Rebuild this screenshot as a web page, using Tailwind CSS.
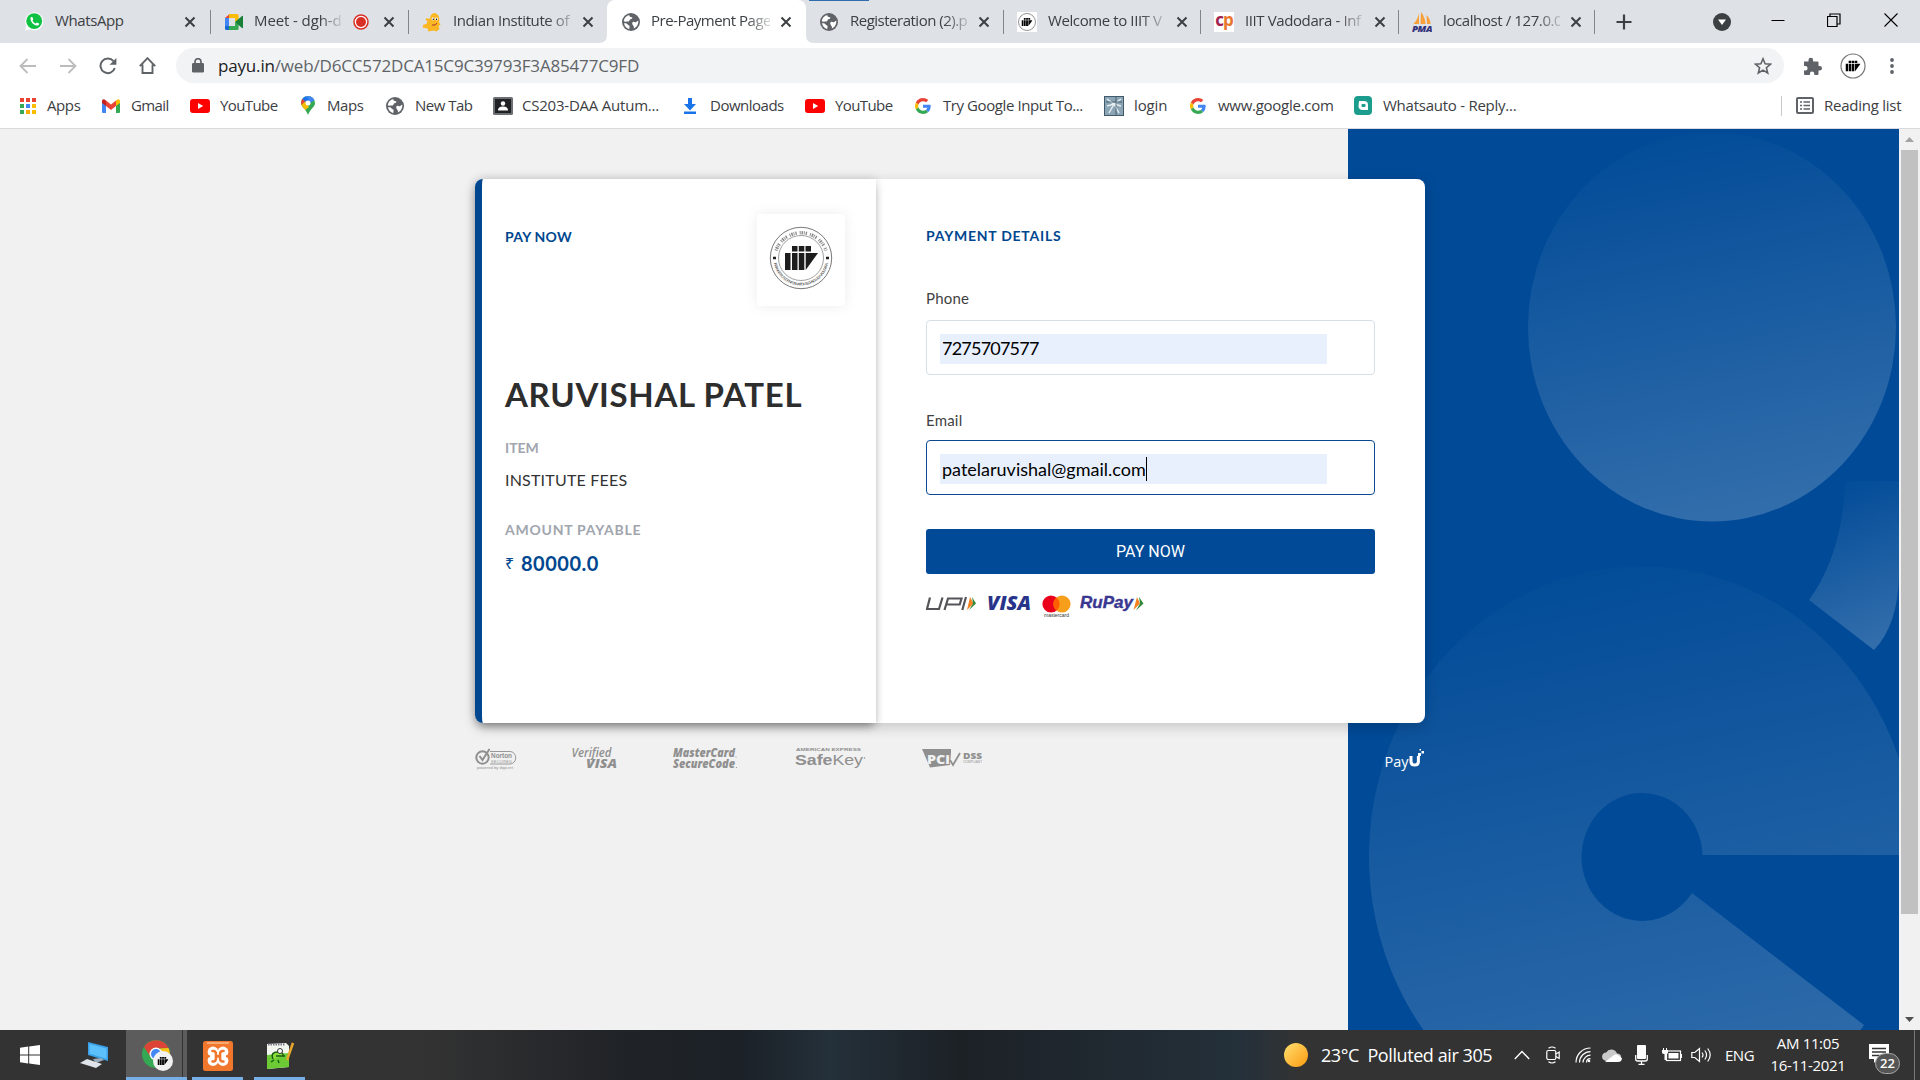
<!DOCTYPE html>
<html lang="en">
<head>
<meta charset="utf-8">
<title>Pre-Payment Page</title>
<script src="https://cdn.jsdelivr.net/npm/@tailwindcss/browser@4"></script>
</head>
<body class="w-[1920px] h-[1080px] overflow-hidden flex flex-col bg-white font-['Open_Sans',sans-serif] text-[15px] text-[#3c4043]">

<svg class="hidden">
  <symbol id="x" viewBox="0 0 12 12"><path d="M1.5 1.5l9 9M10.5 1.5l-9 9" stroke="#3c4043" stroke-width="2" fill="none"/></symbol>
  <symbol id="globe" viewBox="0 0 18 18"><circle cx="9" cy="9" r="9" fill="#5f6368"/><path d="M7.6 1.9C6.500 3 8.400 4 10 4.200c.8.2.3 1.500-.8 1.700-1.300.2-1.700 1.200-2 2.200-.3.8-2 .5-3.800.7l-1.700-.5A7.400 7.400 0 0 1 7.600 1.900z" fill="#fff"/><path d="M2 10.300c2.300-.3 3.400.4 3.600 1.300.3 1 1.800.6 2 1.700.1 1-.6 1.900-.2 2.900A7.300 7.300 0 0 1 2 10.300zM10.600 9.200c1.200-.9 1.900.2 3 .1 1.200-.2 1.300-1.500 2.700-1.600.3 3.300-1.500 6.500-4.600 7.900.6-1.300.2-2-.3-2.700-.6-1-1.900-2.500-.8-3.700z" fill="#fff"/></symbol>
  <symbol id="bars" viewBox="0 0 33 24"><path d="M7 0h5.500v5.500H7zM13.800 0h5.500v5.500h-5.500zM20.500 0H26v5.500h-5.500zM0 7h5.500v17H0zM7 7h5.500v17H7zM13.800 7h5.500v17h-5.500zM20.700 7H33L20.700 24z"/></symbol>
  <symbol id="g" viewBox="0 0 48 48"><path fill="#EA4335" d="M24 9.500c3.540 0 6.710 1.220 9.210 3.600l6.850-6.850C35.900 2.380 30.470 0 24 0 14.620 0 6.510 5.380 2.560 13.220l7.980 6.190C12.430 13.720 17.740 9.500 24 9.500z"/><path fill="#4285F4" d="M46.980 24.550c0-1.570-.15-3.090-.38-4.550H24v9.020h12.940c-.58 2.960-2.260 5.480-4.780 7.180l7.730 6c4.510-4.180 7.090-10.360 7.090-17.650z"/><path fill="#FBBC05" d="M10.530 28.590c-.48-1.450-.76-2.990-.76-4.590s.27-3.140.76-4.590l-7.980-6.190C.92 16.460 0 20.120 0 24c0 3.880.92 7.540 2.560 10.780l7.970-6.190z"/><path fill="#34A853" d="M24 48c6.480 0 11.930-2.130 15.890-5.810l-7.730-6c-2.150 1.450-4.920 2.300-8.160 2.300-6.260 0-11.570-4.220-13.470-9.910l-7.980 6.190C6.510 42.620 14.620 48 24 48z"/></symbol>
  <symbol id="yt" viewBox="0 0 20 14"><rect width="20" height="14" rx="3" fill="#f00"/><path d="M8 4l5.200 3L8 10z" fill="#fff"/></symbol>
</svg>

<!-- Tab strip -->
<div class="relative h-[43px] bg-[#dee1e6] flex items-center shrink-0 tracking-[-0.4px]">
  <div class="absolute left-[809px] top-0 w-[60px] h-[1px] bg-[#2f6eaa]"></div>
  <div class="w-[211px] h-6 pl-[25px] flex items-center border-r border-[#80868b]">
    <svg class="w-[18px] h-[19px]" viewBox="0 0 18 19"><path d="M0 18.500l1.400-4.700A9 9 0 1 1 5 17.300z" fill="#fff"/><circle cx="9.200" cy="9.200" r="7.900" fill="#0fc143"/><path d="M6 5c-1.800 2 1 8 6 8.600 2 0 2.400-1.900 2-2.200l-2-1-1.200 1.200c-1.800-.7-2.700-1.700-3.300-3l.8-1L7.400 5z" fill="#fff"/></svg>
    <span class="ml-3 -mt-[2px] w-[68px] whitespace-nowrap">WhatsApp</span>
    <svg class="ml-[61px] w-3 h-3"><use href="#x"/></svg>
  </div>
  <div class="w-[198px] h-6 pl-[14px] flex items-center border-r border-[#80868b]">
    <svg class="w-[18px] h-4" viewBox="0 0 18 16"><path d="M0 4L4.500 0v4z" fill="#ea4335"/><path d="M0 4h4v8H0z" fill="#4285f4"/><path d="M0 12h4v4H1.500Q0 16 0 14.500z" fill="#1967d2"/><path d="M4 0h8q1.600 0 1.600 1.600V6L10 8V4H4z" fill="#fbbc04"/><path d="M4 12h6V8l3.600 2.500v4Q13.600 16 12 16H4z" fill="#34a853"/><path d="M10 8l7-6q1-.5 1 .6v10.800q0 1.100-1 .6z" fill="#188038"/></svg>
    <span class="ml-[11px] -mt-[2px] w-[88px] whitespace-nowrap overflow-hidden tracking-[-0.1px] [mask-image:linear-gradient(to_right,#000_75%,transparent_103%)]">Meet - dgh-d</span>
    <svg class="ml-[11px] w-4 h-4" viewBox="0 0 16 16"><circle cx="8" cy="8" r="7" fill="#fff" stroke="#d93025" stroke-width="1.500"/><circle cx="8" cy="8" r="5" fill="#d93025"/></svg>
    <svg class="ml-[14px] w-3 h-3"><use href="#x"/></svg>
  </div>
  <div class="w-[198px] h-6 pl-[13px] flex items-center">
    <svg class="w-[20px] h-5" viewBox="0 0 20 20"><path d="M9 3q3-4 7 0 2 3 1 7l1.500 3-2 1 1 3-3 2.500-3-1-5 1-1-3-5-1 1-3 3-.5 1-3-2-1 1-2 3 1z" fill="#fbb624"/><path d="M10 13q4 1 5-2" stroke="#a33" fill="none"/><circle cx="11" cy="7" r="1.400" fill="#fff"/><circle cx="14.500" cy="7" r="1.400" fill="#fff"/><circle cx="11.300" cy="7.200" r=".7"/><circle cx="14.500" cy="7.200" r=".7"/></svg>
    <span class="ml-[11px] -mt-[2px] w-[117px] whitespace-nowrap overflow-hidden [mask-image:linear-gradient(to_right,#000_80%,transparent_110%)]">Indian Institute of</span>
    <svg class="ml-3 w-3 h-3"><use href="#x"/></svg>
  </div>
  <div class="relative w-[199px] h-[43px] pl-[15px] flex items-center bg-white rounded-t-lg">
    <svg class="absolute -left-2 bottom-0 w-2 h-2" viewBox="0 0 8 8"><path d="M8 0v8H0Q8 8 8 0z" fill="#fff"/></svg>
    <svg class="absolute -right-2 bottom-0 w-2 h-2" viewBox="0 0 8 8"><path d="M0 0v8h8Q0 8 0 0z" fill="#fff"/></svg>
    <svg class="w-[18px] h-[18px]"><use href="#globe"/></svg>
    <span class="ml-[11px] -mt-[2px] w-[119px] whitespace-nowrap overflow-hidden tracking-[-0.5px] [mask-image:linear-gradient(to_right,#000_80%,transparent_105%)]">Pre-Payment Page</span>
    <svg class="ml-[10px] w-3 h-3"><use href="#x"/></svg>
  </div>
  <div class="w-[198px] h-6 pl-[14px] flex items-center border-r border-[#80868b]">
    <svg class="w-[18px] h-[18px]"><use href="#globe"/></svg>
    <span class="ml-3 -mt-[2px] w-[118px] whitespace-nowrap overflow-hidden tracking-[-0.5px] [mask-image:linear-gradient(to_right,#000_80%,transparent_105%)]">Registeration (2).p</span>
    <svg class="ml-[10px] w-3 h-3"><use href="#x"/></svg>
  </div>
  <div class="w-[197px] h-6 pl-[13px] flex items-center border-r border-[#80868b]">
    <svg class="w-5 h-5" viewBox="0 0 20 20"><rect width="20" height="20" fill="#fff"/><circle cx="10" cy="10" r="8.500" fill="none" stroke="#777" stroke-width=".8"/><use href="#bars" x="4.500" y="6" width="11" height="8"/></svg>
    <span class="ml-[11px] -mt-[2px] w-[116px] whitespace-nowrap overflow-hidden [mask-image:linear-gradient(to_right,#000_80%,transparent_105%)]">Welcome to IIIT V</span>
    <svg class="ml-3 w-3 h-3"><use href="#x"/></svg>
  </div>
  <div class="w-[198px] h-6 pl-[13px] flex items-center border-r border-[#80868b]">
    <span class="w-5 h-5 bg-white flex items-center justify-center pb-1 font-bold text-[17px] leading-none tracking-[-1px] text-[#a0204f]">c<span class="text-[#e8762c]">p</span></span>
    <span class="ml-[11px] -mt-[2px] w-[117px] whitespace-nowrap overflow-hidden [mask-image:linear-gradient(to_right,#000_80%,transparent_105%)]">IIIT Vadodara - Inf</span>
    <svg class="ml-3 w-3 h-3"><use href="#x"/></svg>
  </div>
  <div class="w-[196px] h-6 pl-[13px] flex items-center border-r border-[#80868b]">
    <svg class="w-5 h-5" viewBox="0 0 20 20"><path d="M7 1v11H1.500Q6 7 7 1zM9 0q4 5 4.500 12H8.500zM14.500 3q4 4 4 9h-3.500z" fill="#f8a13b"/><text x="0" y="19.500" textLength="20" lengthAdjust="spacingAndGlyphs" font-family="Open Sans" font-weight="800" font-style="italic" font-size="8.500" fill="#33337a">PMA</text></svg>
    <span class="ml-[11px] -mt-[2px] w-[117px] whitespace-nowrap overflow-hidden [mask-image:linear-gradient(to_right,#000_80%,transparent_105%)]">localhost / 127.0.0</span>
    <svg class="ml-[10px] w-3 h-3"><use href="#x"/></svg>
  </div>
  <svg class="ml-[21px] w-4 h-4" viewBox="0 0 16 16"><path d="M8 0.500v15M.5 8h15" stroke="#3c4043" stroke-width="2.200"/></svg>
  <svg class="ml-[81px] w-[18px] h-[18px]" viewBox="0 0 18 18"><circle cx="9" cy="9" r="9" fill="#3c4043"/><path d="M5 6.500h8L9 12z" fill="#fff"/></svg>
  <svg class="ml-[40px] mb-1 w-[14px] h-[14px]" viewBox="0 0 14 14"><path d="M.5 7.500h13" stroke="#000"/></svg>
  <svg class="ml-[42px] mb-1 w-[14px] h-[14px]" viewBox="0 0 14 14"><path d="M.5 3.500h9.500v10H.5zM3 3V1h10v10h-2.500" fill="none" stroke="#000" stroke-width="1.200"/></svg>
  <svg class="ml-[43px] mb-1 w-[14px] h-[14px]" viewBox="0 0 14 14"><path d="M.5.5l13 13M13.500.5l-13 13" stroke="#000" stroke-width="1.100"/></svg>
</div>

<!-- Toolbar -->
<div class="h-[45px] flex items-center shrink-0 bg-white pl-[19px]">
  <svg class="w-[17px] h-4" viewBox="0 0 17 16"><path d="M17 8H2M8.500 1L1.500 8l7 7" fill="none" stroke="#babcbe" stroke-width="1.800"/></svg>
  <svg class="ml-6 w-[17px] h-4" viewBox="0 0 17 16"><path d="M0 8h15M8.500 1l7 7-7 7" fill="none" stroke="#babcbe" stroke-width="1.800"/></svg>
  <svg class="ml-[22px] w-[18px] h-[18px]" viewBox="0 0 18 18"><path d="M15.800 11A7.300 7.300 0 1 1 14.500 4.200" fill="none" stroke="#5f6368" stroke-width="2"/><path d="M17.400 1v6.800h-6.800z" fill="#5f6368"/></svg>
  <svg class="ml-[22px] w-[17px] h-[17px]" viewBox="0 0 17 17"><path d="M.8 9.200L8.500 1.200l7.700 8M3.500 7.500V16h10V7.500" fill="none" stroke="#5f6368" stroke-width="1.900"/></svg>
  <div class="ml-5 w-[1608px] h-[35px] rounded-full bg-[#f1f3f4] flex items-center pl-4 pr-3">
    <svg class="w-3 h-[15px]" viewBox="0 0 12 15"><rect y="5" width="12" height="9.500" rx="1.200" fill="#5f6368"/><path d="M3 6V3.700a3 3 0 0 1 6 0V6" fill="none" stroke="#5f6368" stroke-width="1.700"/></svg>
    <span class="ml-[14px] text-[17px] leading-none tracking-[-0.17px] text-[#5f6368] whitespace-nowrap"><span class="text-[#202124]">payu.in</span>/web/D6CC572DCA15C9C39793F3A85477C9FD</span>
    <svg class="ml-auto w-[18px] h-[18px]" viewBox="0 0 18 18"><path d="M9 1.800l2.100 5 5.400.4-4.100 3.500 1.300 5.300L9 13.100 4.300 16l1.300-5.300L1.500 7.200l5.400-.4z" fill="none" stroke="#5f6368" stroke-width="1.600"/></svg>
  </div>
  <svg class="ml-[20px] w-[18px] h-[18px]" viewBox="0 0 18 18"><path d="M0 4.500h4.500V3a2.300 2.300 0 0 1 4.600 0v1.500h4.400q1 0 1 1V9h1.200a2.300 2.300 0 0 1 0 4.600h-1.200V17q0 1-1 1h-3.200v-1.300a2.200 2.200 0 0 0-4.400 0V18H1.200Q0 18 0 17v-3.500h1.400a2.200 2.200 0 0 0 0-4.400H0z" fill="#5f6368"/></svg>
  <svg class="ml-[18px] w-[26px] h-[26px]" viewBox="0 0 26 26"><circle cx="13" cy="13" r="12" fill="#fff" stroke="#777" stroke-width="1.200"/><use href="#bars" x="5.500" y="7.500" width="15" height="11"/></svg>
  <svg class="ml-[24px] w-1 h-4" viewBox="0 0 4 16"><g fill="#5f6368"><circle cx="2" cy="2" r="1.900"/><circle cx="2" cy="8" r="1.900"/><circle cx="2" cy="14" r="1.900"/></g></svg>
</div>

<!-- Bookmarks bar -->
<div class="h-[41px] pb-[5px] flex items-center shrink-0 bg-white border-b border-[#d8dadd] pl-5 whitespace-nowrap">
  <svg class="w-4 h-4" viewBox="0 0 16 16"><path d="M0 0h4v4H0zM6 0h4v4H6zM12 0h4v4h-4z" fill="#ea4335"/><path d="M0 6h4v4H0z" fill="#34a853"/><path d="M6 6h4v4H6z" fill="#4285f4"/><path d="M12 6h4v4h-4zM12 12h4v4h-4z" fill="#fbbc04"/><path d="M0 12h4v4H0z" fill="#34a853"/><path d="M6 12h4v4H6z" fill="#f9ab00"/></svg>
  <span class="ml-[11px] w-[35px] tracking-[-0.4px]">Apps</span>
  <svg class="ml-5 w-[18px] h-[14px]" viewBox="0 0 18 14"><path d="M0 2v11q0 1 1 1h3V6z" fill="#4285f4"/><path d="M18 2v11q0 1-1 1h-3V6z" fill="#34a853"/><path d="M14 1.500L16 .2Q18 0 18 2v2l-4 3z" fill="#fbbc04"/><path d="M4 1.500l5 4 5-4V7l-5 4-5-4z" fill="#ea4335"/><path d="M4 7L0 4V2Q0 0 2 .2l2 1.300z" fill="#c5221f"/></svg>
  <span class="ml-[11px] w-[38px] tracking-[-0.6px]">Gmail</span>
  <svg class="ml-[21px] w-5 h-[14px]"><use href="#yt"/></svg>
  <span class="ml-[10px] w-[58px] tracking-[-0.6px]">YouTube</span>
  <svg class="ml-[23px] w-[14px] h-[19px]" viewBox="0 0 14 19"><clipPath id="pin"><path d="M7 0a7 7 0 0 1 7 7c0 4-5 6-7 12C5 13 0 11 0 7a7 7 0 0 1 7-7z"/></clipPath><g clip-path="url(#pin)"><path fill="#34a853" d="M0 0h14v19H0z"/><path fill="#4285f4" d="M3 0h11v4L7 8z"/><path fill="#1a73e8" d="M3 0l5 3-4 5-4-5z"/><path fill="#ea4335" d="M0 2l4 3-3 4-2-1z"/><path fill="#fbbc04" d="M0 9l5-4 3 6-5 4z"/></g><circle cx="7" cy="7" r="2.500" fill="#fff"/></svg>
  <span class="ml-[12px] w-9 tracking-[-0.4px]">Maps</span>
  <svg class="ml-[23px] w-[18px] h-[18px]"><use href="#globe"/></svg>
  <span class="ml-[11px] w-[56px] tracking-[-0.5px]">New Tab</span>
  <svg class="ml-[22px] w-5 h-[18px]" viewBox="0 0 20 18"><rect width="20" height="18" rx="1.500" fill="#6b6f73"/><rect x="2" y="2" width="16" height="14" fill="#202124"/><circle cx="10" cy="6.500" r="2.200" fill="#fff"/><path d="M5 13.500q0-4 5-4t5 4z" fill="#fff"/></svg>
  <span class="ml-[9px] w-[137px] tracking-[-0.22px]">CS203-DAA Autum...</span>
  <svg class="ml-[25px] w-3 h-4" viewBox="0 0 12 16"><path d="M4 0h4v6h4l-6 6.500L0 6h4zM0 13.500h12V16H0z" fill="#1a73e8"/></svg>
  <span class="ml-[14px] w-[74px] tracking-[-0.5px]">Downloads</span>
  <svg class="ml-[21px] w-5 h-[14px]"><use href="#yt"/></svg>
  <span class="ml-[10px] w-[58px] tracking-[-0.6px]">YouTube</span>
  <svg class="ml-[22px] w-4 h-4"><use href="#g"/></svg>
  <span class="ml-[12px] w-[141px] tracking-[-0.42px]">Try Google Input To...</span>
  <svg class="ml-5 w-5 h-5" viewBox="0 0 20 20"><rect width="20" height="20" rx="1" fill="#8aa5b5"/><rect x=".5" y=".5" width="19" height="19" fill="none" stroke="#42596b"/><path d="M3 3l7 5 7-5M10 8L5 17M10 8l5 9M3 10l7-2 7 2" stroke="#e6eef2" stroke-width="1.500" fill="none"/><path d="M2 6h16M12 1v18" stroke="#2f4654" stroke-width=".7"/></svg>
  <span class="ml-[10px] w-[34px] tracking-[-0.15px]">login</span>
  <svg class="ml-[22px] w-4 h-4"><use href="#g"/></svg>
  <span class="ml-[12px] w-[114px] tracking-[-0.27px]">www.google.com</span>
  <svg class="ml-[22px] w-[18px] h-[19px]" viewBox="0 0 18 19"><rect width="18" height="19" rx="4" fill="#1b9c8c"/><path d="M5 5h5a4 4 0 0 1 4 4v5H8a4 4 0 0 1-3.500-4z" fill="#fff"/><rect x="7.500" y="8" width="4" height="3" rx="1" fill="#1b9c8c"/></svg>
  <span class="ml-[11px] w-[132px] tracking-[-0.25px]">Whatsauto - Reply...</span>
  <div class="ml-[266px] w-px h-5 bg-[#c6c9cc]"></div>
  <svg class="ml-[14px] w-[18px] h-[17px]" viewBox="0 0 18 17"><rect x="1" y="1" width="16" height="15" rx="1" fill="none" stroke="#5f6368" stroke-width="2"/><path d="M4 5h2M4 8.500h2M4 12h2M7.500 5H14M7.500 8.500H14M7.500 12H14" stroke="#5f6368" stroke-width="1.600"/></svg>
  <span class="ml-[10px] w-[78px] tracking-[-0.25px]">Reading list</span>
</div>

<!-- Page viewport -->
<div class="h-[901px] flex shrink-0 bg-[#f1f1f1]">
  <main class="relative w-[1899px] h-full overflow-hidden font-[Lato,sans-serif]">
    <svg class="absolute left-[1348px] top-0 w-[551px] h-[901px]" viewBox="1348 129 551 901">
      <defs>
        <linearGradient id="a" x1=".4" y1="0" x2=".6" y2="1"><stop offset="0" stop-color="#fff" stop-opacity="0.01"/><stop offset="1" stop-color="#fff" stop-opacity=".2"/></linearGradient>
      </defs>
      <rect x="1348" y="129" width="551" height="901" fill="#004a97"/>
      <ellipse cx="1712" cy="327" rx="184" ry="194.500" fill="url(#a)"/>
      <path d="M1845.500 481Q1842 555 1809 600L1874 650Q1898 625 1899 575V481z" fill="url(#a)"/>
      <path d="M1915 855A273 290 0 1 0 1864 1025L1692 893A60.500 64 0 1 1 1702.500 855z" fill="url(#a)"/>
    </svg>
    <div class="relative pl-[475px] pt-[50px]">
      <div class="w-[950px] h-[544px] flex bg-white rounded-lg shadow-[0_4px_14px_rgba(0,0,0,0.18)]">
        <!-- Summary -->
        <section class="relative w-[401px] border-l-[7px] border-[#00478f] rounded-l-lg pl-[23px] pr-[31px] shadow-[0_6px_10px_-3px_rgba(0,0,0,0.35),0_0_10px_rgba(0,0,0,0.15)] [clip-path:inset(-20px_-12px_-20px_-20px)]">
          <div class="flex justify-between pt-[35px]">
            <h2 class="pt-[14px] text-[14px] leading-[18px] font-bold tracking-[0.25px] text-[#00478f]">PAY NOW</h2>
            <div class="w-[88px] h-[92px] rounded bg-white shadow-[0_0_14px_rgba(0,0,0,0.08)] flex justify-center pt-[12px]">
              <svg class="w-16 h-16" viewBox="0 0 64 64">
                <path id="ring" d="M4.500 32A27.500 27.500 0 0 0 59.500 32" fill="none"/>
                <circle cx="32" cy="32" r="30.700" fill="none" stroke="#555" stroke-width=".8"/>
                <circle cx="32" cy="32" r="22.500" fill="none" stroke="#888" stroke-width=".8"/>
                <path d="M7 24.500A26.500 26.500 0 0 1 57 24.500" fill="none" stroke="#8a8a8a" stroke-width="3.400" stroke-dasharray="1 .9 1.600 .8 .8 1 1.300 3"/>
                <text font-family="Liberation Sans" font-size="3.800" fill="#444"><textPath href="#ring" startOffset="5" textLength="76">INDIAN INSTITUTE OF INFORMATION TECHNOLOGY VADODARA</textPath></text>
                <path d="M4 32h3M57 32h3" stroke="#222" stroke-width="2.500"/>
                <use href="#bars" x="16" y="20" width="33" height="24" fill="#1d1d1d"/>
              </svg>
            </div>
          </div>
          <h1 class="mt-[68px] text-[33px] leading-[40px] font-bold tracking-[0.68px] text-[#2d2d2d] whitespace-nowrap">ARUVISHAL PATEL</h1>
          <div class="mt-[25px] text-[14px] leading-[18px] font-bold text-[#a1a5ae]">ITEM</div>
          <div class="mt-[13px] text-[16px] leading-5 tracking-[0.2px] text-[#333]">INSTITUTE FEES</div>
          <div class="mt-[31px] text-[14px] leading-[18px] font-bold tracking-[0.75px] text-[#a1a5ae]">AMOUNT PAYABLE</div>
          <div class="mt-[11px] flex items-center text-[20px] leading-[26px] font-bold tracking-[0.5px] text-[#00478f]"><span class="w-4 text-[16px] font-normal font-['Noto_Sans',sans-serif]">₹</span><span>80000.0</span></div>
        </section>
        <!-- Form -->
        <section class="w-[549px] pl-[50px] pr-[50px] pt-[48px]">
          <h2 class="text-[14px] leading-[18px] font-bold tracking-[0.75px] text-[#00478f]">PAYMENT DETAILS</h2>
          <div class="mt-[43px] text-[15px] leading-5 tracking-[0.2px] text-[#3f3f3f]">Phone</div>
          <div class="mt-[12px] h-[55px] rounded border border-[#d6dfe8] pl-[13px] pt-[13px]">
            <div class="w-[387px] h-[30px] bg-[#e8f0fe] pl-[2px] text-[18px] leading-[29px] tracking-[-0.78px] text-black">7275707577</div>
          </div>
          <div class="mt-[35px] text-[15px] leading-5 tracking-[0.2px] text-[#3f3f3f]">Email</div>
          <div class="mt-[10px] h-[55px] rounded border border-[#0b4a8f] pl-[13px] pt-[13px]">
            <div class="w-[387px] h-[30px] bg-[#e8f0fe] pl-[2px] text-[18px] leading-[29px] text-black flex items-center"><span>patelaruvishal@gmail.com</span><i class="w-px h-6 bg-black"></i></div>
          </div>
          <button class="mt-[34px] block w-full h-[45px] pt-px rounded-[3px] bg-[#004a97] text-white text-[16px] font-['Roboto',sans-serif]">PAY NOW</button>
          <svg class="mt-[20px] w-[220px] h-6" viewBox="926 594 220 24">
            <g fill="none" stroke="#555459" stroke-width="2.200"><path d="M930 597.500l-3 11.500h12l3.500-11.500M944.500 610l3.500-11.500h13.500l-1.800 6h-12.500M966 597l-3.700 13"/></g>
            <path d="M970 597l3.500 6.500-6.500 6.500z" fill="#f58220"/><path d="M972 597l4 6.500-7 6.500 4-6.500z" fill="#2f8a3b"/>
            <text x="987" y="610" textLength="44" lengthAdjust="spacingAndGlyphs" font-family="Open Sans" font-weight="800" font-style="italic" font-size="19" fill="#28348a">VISA</text>
            <circle cx="1051" cy="604" r="8.600" fill="#eb001b"/><circle cx="1062" cy="604" r="8.600" fill="#f79e1b"/><path d="M1056.500 597.400a8.600 8.600 0 0 1 0 13.200 8.600 8.600 0 0 1 0-13.200z" fill="#ff5f00"/>
            <text x="1044" y="617" textLength="25" lengthAdjust="spacingAndGlyphs" font-family="Liberation Sans" font-size="5" fill="#333">mastercard</text>
            <text x="1080" y="608" textLength="53" lengthAdjust="spacingAndGlyphs" font-family="Liberation Sans" font-weight="700" font-style="italic" font-size="17" fill="#3a3791" stroke="#3a3791" stroke-width=".4">RuPay</text>
            <path d="M1137 597l3 6.500-6.500 6.500z" fill="#f58220"/><path d="M1139 597l4.500 6.500-7.500 7 4-7z" fill="#2f8a3b"/>
          </svg>
        </section>
      </div>
      <!-- Trust marks -->
      <svg class="mt-[22px] w-[950px] h-7" viewBox="475 745 950 28" fill="#8f8f8f">
        <circle cx="482.500" cy="757.500" r="6.200" fill="none" stroke="#8f8f8f" stroke-width="2"/><path d="M479.500 756l3 4 7-11" fill="none" stroke="#8f8f8f" stroke-width="2"/>
        <path d="M490 751.500h20a5.500 6 0 0 1 0 12.500h-20" fill="none" stroke="#8f8f8f" stroke-width=".9"/>
        <text x="491" y="758" textLength="21" lengthAdjust="spacingAndGlyphs" font-family="Liberation Sans" font-size="7" font-weight="700">Norton</text>
        <text x="491" y="763" textLength="21" font-family="Liberation Sans" font-size="3.800">SECURED</text>
        <text x="477" y="768.500" textLength="36" font-family="Liberation Sans" font-size="4">powered by digicert</text>
        <g font-family="Open Sans" font-style="italic"><text x="571.500" y="756.500" textLength="40" lengthAdjust="spacingAndGlyphs" font-size="12" font-weight="600">Verified</text>
        <text x="586" y="768" textLength="31" lengthAdjust="spacingAndGlyphs" font-size="13" font-weight="800">VISA</text>
        <text x="673" y="757" textLength="62" lengthAdjust="spacingAndGlyphs" font-size="12.500" font-weight="800">MasterCard</text>
        <text x="673" y="768" textLength="62" lengthAdjust="spacingAndGlyphs" font-size="12.500" font-weight="800">SecureCode</text></g>
        <circle cx="736" cy="757" r=".6"/><circle cx="736.500" cy="767.500" r=".6"/>
        <text x="796" y="751" textLength="65" lengthAdjust="spacingAndGlyphs" font-family="Liberation Sans" font-size="4" font-weight="700">AMERICAN EXPRESS</text>
        <text x="795" y="765" textLength="68" lengthAdjust="spacingAndGlyphs" font-family="Liberation Sans" font-size="15"><tspan font-weight="700">Safe</tspan>Key</text><circle cx="864.500" cy="758" r=".8"/>
        <path d="M922 749h29v3l-1 13-20 2.500z"/><text x="927" y="764" textLength="23" lengthAdjust="spacingAndGlyphs" font-family="Open Sans" font-size="12" font-weight="800" fill="#f1f1f1">PCi</text><path d="M950 760l3 5 7-12" fill="none" stroke="#8f8f8f" stroke-width="1.800"/>
        <text x="963" y="758.500" textLength="19" lengthAdjust="spacingAndGlyphs" font-family="Open Sans" font-size="9" font-weight="800">DSS</text>
        <text x="963" y="762.500" textLength="19" lengthAdjust="spacingAndGlyphs" font-family="Open Sans" font-size="3">COMPLIANT</text>
        <text x="1384.500" y="766.500" textLength="24" lengthAdjust="spacingAndGlyphs" font-family="Open Sans" font-weight="500" font-size="15" fill="#fff">Pay</text>
        <path d="M1411 756v5.500q0 3.500 3.700 3.500t3.700-3.500V756" fill="none" stroke="#fff" stroke-width="3"/><path d="M1418 753h3v3h-3zM1421.500 751h2.500v2.500h-2.500zM1419.500 749h1.500v1.500h-1.500z" fill="#fff"/>
      </svg>
    </div>
  </main>
  <div class="w-[21px] bg-[#f1f1f1] flex flex-col items-center">
    <svg class="mt-2 w-[9px] h-[5px]" viewBox="0 0 9 5"><path d="M0 5l4.500-5L9 5z" fill="#a3a3a3"/></svg>
    <div class="mt-2 w-[17px] h-[764px] bg-[#c1c1c1]"></div>
    <svg class="mt-auto mb-2 w-[9px] h-[5px]" viewBox="0 0 9 5"><path d="M0 0l4.500 5L9 0z" fill="#505050"/></svg>
  </div>
</div>

<!-- Taskbar -->
<div class="relative h-[50px] flex items-center shrink-0 bg-[linear-gradient(to_right,#333_0,#333_420px,#202327_620px,#1b2127_740px,#24303a_830px,#1c2126_960px,#24303a_1240px,#333_1300px)] text-white">
  <svg class="ml-5 w-5 h-5" viewBox="0 0 20 20"><path d="M0 2.800l8.200-1.200v8H0zM9.200 1.500L20 0v9.600H9.200zM0 10.500h8.200v8L0 17.300zM9.200 10.500H20V20L9.200 18.600z" fill="#fff"/></svg>
  <svg class="ml-10 w-7 h-[26px]" viewBox="0 0 28 26"><path d="M8 0l20 5v14L8 13z" fill="#3aa0e8"/><path d="M9.500 2l17 4.500v10.300L9.500 11.600z" fill="#5cc0fa"/><path d="M13 17l8-1 3 2-8 3z" fill="#9ab"/><path d="M0 21l7-4 15 5-6 4z" fill="#dfe5ea"/></svg>
  <div class="ml-[18px] w-[61px] h-[50px] bg-[#5c5c5c] border-b-[3px] border-[#76b0e6] flex items-center pl-4 pt-1 relative">
    <svg class="w-8 h-8" viewBox="0 0 32 32"><circle cx="14" cy="14" r="14" fill="#34a853"/><path d="M2 7A14 14 0 0 1 26.500 8L14 8.500 8 16z" fill="#db4437"/><path d="M26.500 8A14 14 0 0 1 14 28l6-12-2-7.500z" fill="#fbc116"/><circle cx="14" cy="14" r="6.500" fill="#fff"/><circle cx="14" cy="14" r="5" fill="#4285f4"/><circle cx="21" cy="21" r="10" fill="#f2f2f2"/><use href="#bars" x="15.500" y="17" width="11" height="8"/></svg>
    <div class="absolute right-1 top-0 w-px h-[47px] bg-[#333]"></div>
  </div>
  <div class="ml-[5px] w-[51px] h-[50px] border-b-[3px] border-[#76b0e6] flex items-center justify-center pt-1">
    <svg class="w-[30px] h-[30px]" viewBox="0 0 30 30"><rect width="30" height="30" rx="2.500" fill="#f0772b"/><path d="M4 2h22" stroke="#fbd9c0"/><g fill="#fff"><circle cx="10" cy="11" r="5.400"/><circle cx="20" cy="11" r="5.400"/><circle cx="10" cy="19.500" r="5.400"/><circle cx="20" cy="19.500" r="5.400"/><path d="M8 12h14v7H8z"/></g><path d="M9.500 10q3.500-.5 3.500 3.500v3.500q0 4-3.500 3.500M20.500 10q-3.500-.5-3.500 3.500v3.500q0 4 3.500 3.500M13 15.200h4" fill="none" stroke="#f0772b" stroke-width="2.600" stroke-linecap="round"/><path d="M4 15.200l3-1.200v2.500zM26 15.200l-3-1.200v2.500z" fill="#f0772b"/></svg>
  </div>
  <div class="ml-[11px] w-[51px] h-[50px] border-b-[3px] border-[#76b0e6] flex items-center justify-center pt-1">
    <svg class="w-7 h-7" viewBox="0 0 28 28"><path d="M1 2l19-1 3 3v21L1 27z" fill="#f3f6ef"/><path d="M1 13l22-2v14L1 27z" fill="#6ccb35"/><path d="M2 2.500h17" stroke="#778" stroke-dasharray="1.500 1" stroke-width="2"/><path d="M7 17q-3-7 5-7 6 0 5 4M10 14h9M8 18l-3 2M12 18l1 3" stroke="#175b12" stroke-width="1.400" fill="#8ede3a"/><circle cx="14" cy="9" r="2.500" fill="#fff" stroke="#333"/><path d="M27 1l-6 17" stroke="#e7a72b" stroke-width="2.500"/></svg>
  </div>
  <svg class="ml-[979px] w-6 h-6" viewBox="0 0 24 24"><defs><linearGradient id="sun" x2="1" y2="1"><stop stop-color="#ffdf70"/><stop offset="1" stop-color="#fb9a10"/></linearGradient></defs><circle cx="12" cy="12" r="12" fill="url(#sun)"/></svg>
  <span class="ml-[13px] w-[171px] text-[18px] tracking-[-0.42px] whitespace-pre">23°C  Polluted air 305</span>
  <svg class="ml-[22px] w-4 h-[10px]" viewBox="0 0 16 10"><path d="M.8 9L8 1.500 15.200 9" fill="none" stroke="#fff" stroke-width="1.400"/></svg>
  <svg class="ml-[16px] w-[14px] h-[18px]" viewBox="0 0 14 18" fill="none" stroke="#fff" stroke-width="1.200"><rect x=".8" y="4.500" width="9" height="9" rx="1.500"/><path d="M9.800 8l3.400-2v6.500L9.800 10.500M2.500 2.200q3.500-2.400 7 0M2.500 15.800q3.500 2.400 7 0"/></svg>
  <svg class="ml-[15px] w-4 h-4" viewBox="0 0 16 16" fill="none" stroke="#fff" stroke-width="1.200"><path d="M1 15.500A14.500 14.500 0 0 1 15.500 1M4.500 15.500A11 11 0 0 1 15.500 4.600M8 15.500A7.500 7.500 0 0 1 15.500 8.200"/><path d="M11.500 15.500A4 4 0 0 1 15.500 11.700"/><circle cx="14" cy="14" r="1.300" fill="#fff" stroke="none"/></svg>
  <svg class="ml-[11px] w-5 h-[13px]" viewBox="0 0 20 13"><path d="M4.500 12a4.300 4.300 0 0 1-.3-8.600A6 6 0 0 1 15 4.500a4.200 4.200 0 0 1 1 8.300z" fill="#c9c9c9"/><path d="M3 13l9-7q2-1.500 4 0l4 3.500Q19.500 13 16 13z" fill="#fff"/></svg>
  <svg class="ml-[13px] w-[13px] h-5" viewBox="0 0 13 20"><rect x="2" y="0" width="9" height="14" rx="1" fill="#fff"/><path d="M.7 10v4q0 2 2 2h7.600q2 0 2-2v-4M6.500 16v3M3.500 19.300h6" fill="none" stroke="#fff" stroke-width="1.300"/></svg>
  <svg class="ml-[14px] w-5 h-[14px]" viewBox="0 0 20 14"><rect x="4.500" y="3" width="14" height="9.500" fill="none" stroke="#fff" stroke-width="1.200"/><path d="M6.500 5h10v5.500h-10zM19 6h1v4h-1zM0 2h6v2.500q0 1.500-2 1.500v6H2.500V6Q0 6 0 4.500zM1 0h1v2H1zM4 0h1v2H4z" fill="#fff"/></svg>
  <svg class="ml-[9px] w-[21px] h-4" viewBox="0 0 21 16" fill="none" stroke="#fff" stroke-width="1.200"><path d="M.8 5.500h3L8.500 1.500v13L3.800 10.500h-3zM11 5.500q2 2.500 0 5M13.800 3.500q3.500 4.500 0 9M16.700 1.500q5 6.500 0 13"/></svg>
  <span class="ml-[13px] w-[29px] tracking-[-0.5px]">ENG</span>
  <div class="ml-4 w-[76px] -mt-[2px] flex flex-col items-center leading-[22px] whitespace-nowrap tracking-[-0.35px]"><span>AM 11:05</span><span>16-11-2021</span></div>
  <div class="relative ml-[23px] mb-1 w-5 h-[19px]">
    <svg class="w-5 h-[19px]" viewBox="0 0 20 19"><path d="M0 0h20v15H9l-4 4v-4H0z" fill="#fff"/><path d="M3 4.500h14M3 8h14M3 11.500h9" stroke="#333" stroke-width="1.300"/></svg>
    <span class="absolute left-[6px] top-[9px] w-[25px] h-[21px] rounded-full bg-[#555] border border-[#aaa] flex items-center justify-center text-[13px] font-semibold leading-none">22</span>
  </div>
  <div class="absolute left-[1914px] top-0 w-px h-full bg-[#777]"></div>
</div>
</body>
</html>
